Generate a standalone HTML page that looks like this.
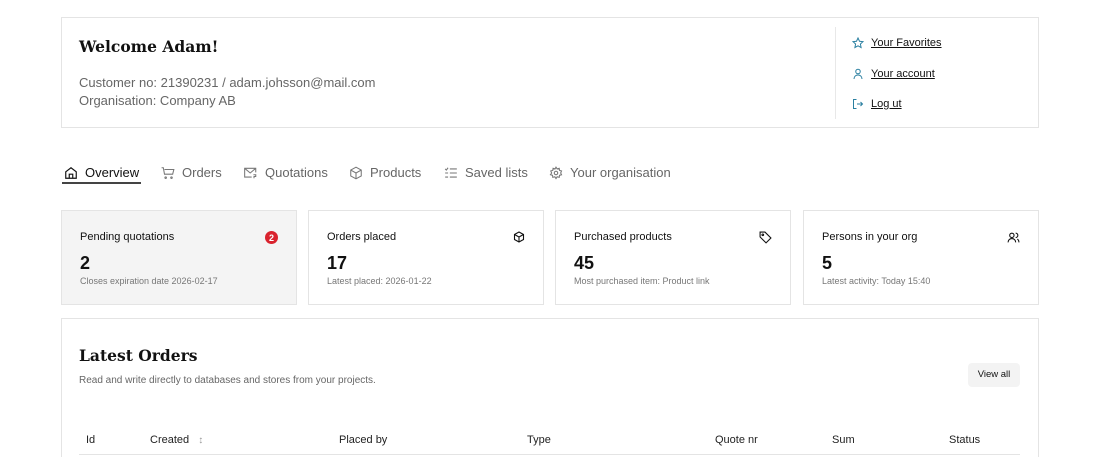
<!DOCTYPE html>
<html><head><meta charset="utf-8"><style>
*{box-sizing:border-box;margin:0;padding:0}
html,body{width:1100px;height:457px;overflow:hidden}
body{background:#fff;font-family:"Liberation Sans",sans-serif;color:#111;position:relative}
.abs{position:absolute}
.box{position:absolute;border:1px solid #e4e4e4;background:#fff}
.h1{font-family:"DejaVu Serif",serif;font-weight:bold;font-size:15.5px;color:#111}
.grey{color:#666;font-size:13px}
.link{font-size:11px;color:#111;text-decoration:underline;display:flex;align-items:center;gap:7px;position:absolute;left:852px}
.tab{position:absolute;top:165px;font-size:13px;color:#666;display:flex;align-items:center;gap:7px}
.card{position:absolute;top:210px;width:236px;height:95px;border:1px solid #e4e4e4;padding:0 17px}
.card .t{position:absolute;top:20px;left:18px;font-size:11px;color:#111}
.card .n{position:absolute;top:42px;left:18px;font-size:18px;font-weight:bold}
.card .s{position:absolute;top:65px;left:18px;font-size:9px;color:#777}
.card svg{position:absolute;top:20px;right:18px}
.th{position:absolute;top:434px;font-size:11px;color:#222}
</style></head><body>
<div class="box" style="left:61px;top:17px;width:978px;height:111px"></div>
<div class="abs h1" style="left:79px;top:37px">Welcome Adam!</div>
<div class="abs grey" style="left:79px;top:75px">Customer no: 21390231 / adam.johsson@mail.com</div>
<div class="abs grey" style="left:79px;top:93px">Organisation: Company AB</div>
<div class="abs" style="left:835px;top:27px;width:1px;height:92px;background:#e8e8e8"></div>
<div class="link" style="top:37px"><svg width="12" height="12" viewBox="0 0 24 24" fill="none" stroke="#2a7fa0" stroke-width="2"><path d="M12 2l3 6.5 7 .8-5.2 4.8 1.4 7L12 17.6 5.8 21l1.4-7L2 9.3l7-.8z"/></svg>Your Favorites</div>
<div class="link" style="top:68px"><svg width="12" height="12" viewBox="0 0 24 24" fill="none" stroke="#2a7fa0" stroke-width="2"><circle cx="12" cy="7" r="4.5"/><path d="M4 22c0-5 3.5-8 8-8s8 3 8 8"/></svg>Your account</div>
<div class="link" style="top:98px"><svg width="12" height="12" viewBox="0 0 24 24" fill="none" stroke="#2a7fa0" stroke-width="2"><path d="M9 3H3v18h6M10 12h11M17 8l4 4-4 4"/></svg>Log ut</div>

<div class="tab" style="left:64px;color:#111"><svg width="14" height="14" viewBox="0 0 24 24" fill="none" stroke="#111" stroke-width="2"><path d="M3 10l9-7 9 7v11H3zM9 21v-7h6v7"/></svg>Overview</div>
<div class="abs" style="left:62px;top:182px;width:79px;height:2px;background:#444"></div>
<div class="tab" style="left:161px"><svg width="14" height="14" viewBox="0 0 24 24" fill="none" stroke="#777" stroke-width="1.8"><path d="M1 3h3l2 11h14l2-8H6"/><circle cx="8" cy="20" r="1.3"/><circle cx="18" cy="20" r="1.3"/></svg>Orders</div>
<div class="tab" style="left:243px"><svg width="15" height="14" viewBox="0 0 24 24" fill="none" stroke="#777" stroke-width="1.8"><path d="M21 11V4H2v15h12M2 4l9.5 8L21 4M17 15h4v3h-3v3"/></svg>Quotations</div>
<div class="tab" style="left:349px"><svg width="14" height="14" viewBox="0 0 24 24" fill="none" stroke="#777" stroke-width="1.8"><path d="M12 2l9 5v10l-9 5-9-5V7zM3 7l9 5 9-5M12 12v10"/></svg>Products</div>
<div class="tab" style="left:444px"><svg width="14" height="14" viewBox="0 0 24 24" fill="none" stroke="#777" stroke-width="1.8"><path d="M10 5h12M10 12h12M10 19h12M2 5l2 2 3-4M2 12h5M2 19h5"/></svg>Saved lists</div>
<div class="tab" style="left:549px"><svg width="14" height="14" viewBox="0 0 24 24" fill="none" stroke="#777" stroke-width="1.8"><circle cx="12" cy="12" r="3"/><path d="M12 2l2 3 3.5-1 .5 3.5 3.5 1-1.5 3.5 1.5 3-3.5 1-.5 3.5-3.5-1-2 3-2-3-3.5 1-.5-3.5-3.5-1L4.5 12 3 8.5l3.5-1L7 4l3.5 1z"/></svg>Your organisation</div>

<div class="card" style="left:61px;background:#f4f4f4"><div class="t">Pending quotations</div><div class="n">2</div><div class="s">Closes expiration date 2026-02-17</div>
<svg width="13" height="13" viewBox="0 0 13 13" style="right:18px"><circle cx="6.5" cy="6.5" r="6.5" fill="#d9232e"/><text x="6.5" y="10" font-size="9" font-weight="bold" fill="#fff" text-anchor="middle" font-family="Liberation Sans">2</text></svg></div>
<div class="card" style="left:308px"><div class="t">Orders placed</div><div class="n">17</div><div class="s">Latest placed: 2026-01-22</div>
<svg width="12" height="12" viewBox="0 0 24 24" fill="none" stroke="#111" stroke-width="2.2"><path d="M12 2l9 5v10l-9 5-9-5V7zM3 7l9 5 9-5M12 12v10"/></svg></div>
<div class="card" style="left:555px"><div class="t">Purchased products</div><div class="n">45</div><div class="s">Most purchased item: Product link</div>
<svg width="13" height="13" viewBox="0 0 24 24" fill="none" stroke="#111" stroke-width="2"><path d="M2 2h9l11 11-9 9L2 11z"/><circle cx="7" cy="7" r="1.5"/></svg></div>
<div class="card" style="left:803px"><div class="t">Persons in your org</div><div class="n">5</div><div class="s">Latest activity: Today 15:40</div>
<svg width="13" height="13" viewBox="0 0 24 24" fill="none" stroke="#111" stroke-width="2"><circle cx="9" cy="8" r="4"/><path d="M2 21c0-4 3-7 7-7s7 3 7 7M16 4a4 4 0 010 8M19 15c2 1 3 3 3 6"/></svg></div>

<div class="box" style="left:61px;top:318px;width:978px;height:160px"></div>
<div class="abs h1" style="left:79px;top:346px">Latest Orders</div>
<div class="abs" style="left:79px;top:375px;font-size:10px;color:#666">Read and write directly to databases and stores from your projects.</div>
<div class="abs" style="left:968px;top:363px;width:52px;height:24px;background:#f3f3f3;border-radius:4px;font-size:9.5px;text-align:center;line-height:24px">View all</div>
<div class="th" style="left:86px">Id</div>
<div class="th" style="left:150px">Created <span style="color:#999;font-size:10px;margin-left:6px">&#8597;</span></div>
<div class="th" style="left:339px">Placed by</div>
<div class="th" style="left:527px">Type</div>
<div class="th" style="left:715px">Quote nr</div>
<div class="th" style="left:832px">Sum</div>
<div class="th" style="left:949px">Status</div>
<div class="abs" style="left:79px;top:454px;width:941px;height:1px;background:#e4e4e4"></div>
</body></html>
